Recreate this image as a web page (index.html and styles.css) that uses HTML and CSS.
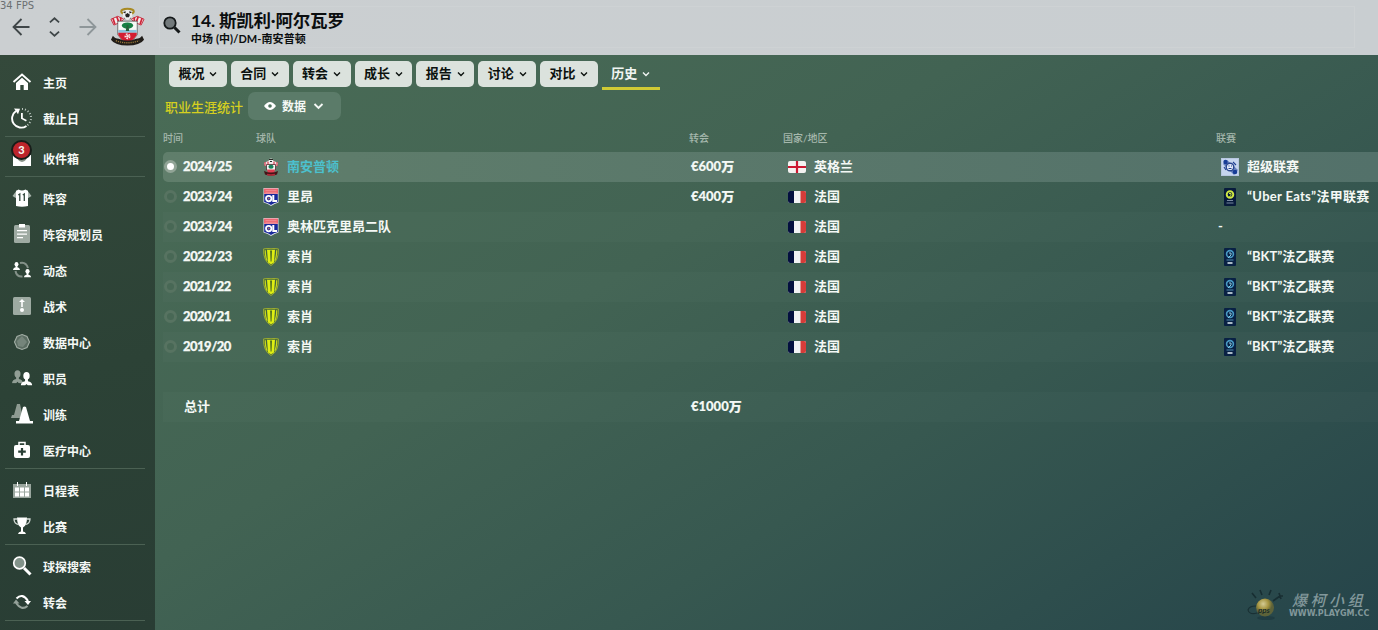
FILE: index.html
```
<!DOCTYPE html>
<html lang="zh-CN">
<head>
<meta charset="utf-8">
<title>斯凯利·阿尔瓦罗</title>
<link rel="stylesheet" href="styles.css">
</head>
<body>
<svg class="defs" aria-hidden="true">
  <symbol id="chev" viewBox="0 0 8 6"><path d="M1 1.500 4 4.500 7 1.500" fill="none" stroke="currentColor" stroke-width="1.400"/></symbol>
  <symbol id="saints" viewBox="0 0 36 40">
    <ellipse cx="18" cy="4" rx="6.500" ry="2.800" fill="none" stroke="#a88a22" stroke-width="2"/>
    <path d="M1 12 8 9l6 3-3 3-7 3zM35 12l-7-3-6 3 3 3 7 3z" fill="#f2eeee" stroke="#c52a3c" stroke-width="1"/>
    <path d="m3 11 2 6M7 9.500l2 5.500M11 10v4M33 11l-2 6M29 9.500 27 15M25 10v4" stroke="#cf2337" stroke-width="1.800"/>
    <circle cx="18" cy="7.500" r="5" fill="#eee"/><path d="m18 5.500 2.500 2-1 2.500h-3l-1-2.500zM13.500 5l2.500-1.500V6zM22.500 5 20 3.500V6zM14.500 10l1.500 2h-1zM21.500 10 20 12h1z" fill="#222"/>
    <path d="M8 14h20v14q-3 6-10 8-7-2-10-8z" fill="#f7f8f6" stroke="#444" stroke-width=".7"/>
    <path d="M8.500 23h19v3h-19z" fill="#8ac3dc"/><path d="M8.500 26h19v2q-3 6-9.500 8-6.500-2-9.500-8z" fill="#d31e32"/>
    <ellipse cx="18" cy="18.500" rx="5.800" ry="3.200" fill="#168044"/><path d="M17.200 18h1.600l1 6h-3.600z" fill="#28613a"/>
    <circle cx="18" cy="29.500" r="2.200" fill="none" stroke="#f8e4e6" stroke-width="1.800" stroke-dasharray="1.600 1"/><circle cx="18" cy="29.500" r="1.200" fill="#f8e4e6"/>
    <path d="M3 29q2 3 6 3 9 4 18 0 4 0 6-3l2 4q-4 6-17 6T1 33z" fill="#211d19"/>
    <path d="M6 34q12 4.500 24 0" fill="none" stroke="#9c7c3c" stroke-width="1.400" stroke-dasharray="1.200 1"/>
  </symbol>
  <symbol id="saints-sm" viewBox="0 0 16 18">
    <path d="M1 5 5 3h6l4 2-1 3H2z" fill="#efdfe1"/><path d="M2 4v4M5 3.500v3M14 4v4M11 3.500v3" stroke="#d84254" stroke-width="1.200"/>
    <circle cx="8" cy="3" r="2.400" fill="#eee"/><path d="M6 1.500h4M7 3.500h2" stroke="#2a2422" stroke-width="1.200"/>
    <path d="M3.500 6.500h9V12L8 16l-4.500-4z" fill="#f4f8f5" stroke="#512b2e" stroke-width=".8"/><ellipse cx="8" cy="8.700" rx="2.600" ry="2" fill="#17805b"/>
    <path d="M4 11.500h8L11 15H5z" fill="#df4052"/><path d="M1 13q7 3 14 0l-1 3.500q-6 2-12 0z" fill="#451417"/><path d="M4 16.500q4 1 8 0" stroke="#b22837" stroke-width="1.500" fill="none"/>
  </symbol>
  <symbol id="ol" viewBox="0 0 15 18">
    <path d="M0 0h15v14.500q-4 1-7.500 3.500Q4.500 15.500 0 14.500z" fill="#e4e5ee"/><path d="M.5.500h14v5.200H.5z" fill="#ed6873"/><path d="M2 2.500h11M2 4.300h11" stroke="#f5959b" stroke-width=".7"/>
    <path d="M.7 6h13.600v8q-4 1-6.800 3Q4.700 15 .7 14z" fill="#17289a"/>
    <circle cx="5.200" cy="10.600" r="2.700" fill="none" stroke="#fff" stroke-width="1.800"/><path d="M9.800 7v6h3.700" fill="none" stroke="#fff" stroke-width="2"/><circle cx="5.200" cy="10.600" r="1" fill="#b76c60"/>
  </symbol>
  <symbol id="sochaux" viewBox="0 0 16 18">
    <path d="M.6.900Q8-.4 15.400.900 16 13 8 17.500 0 13 .6.900z" fill="#42643b" stroke="#a8b72c" stroke-width=".9"/>
    <path d="M4 1.700h8L11 14.500 8 16.300 5 14.500z" fill="#dfee12"/>
    <path d="M2.300 2.200Q2.200 9 4.200 12.800M13.700 2.200q.1 6.800-1.900 10.600" fill="none" stroke="#c8d81c" stroke-width="1.200"/>
    <path d="M7.200 2.500h1.700l-.4 11h-.9z" fill="#3b5d22"/>
  </symbol>
  <symbol id="eng" viewBox="0 0 18 12"><rect width="18" height="12" rx="2" fill="#f3f1f0"/><path d="M9 0v12M0 6h18" stroke="#cc1831" stroke-width="2.200"/></symbol>
  <symbol id="fra" viewBox="0 0 18 12"><rect width="18" height="12" rx="2" fill="#f1f2f4"/><path d="M6 0v12H2q-2 0-2-2V2q0-2 2-2z" fill="#04103f"/><path d="M12.500 0v12H16q2 0 2-2V2q0-2-2-2z" fill="#d63c39"/></symbol>
  <symbol id="pl" viewBox="0 0 18 18"><rect x=".5" y=".5" width="17" height="17" fill="#c6d5ef" stroke="#b8c7e0"/><path d="m2 6 4-4 11 10-4 5z" fill="#6a84c0"/><circle cx="4.500" cy="4" r="2.200" fill="#173c96"/><circle cx="14" cy="14" r="2.300" fill="#173c96"/><circle cx="9" cy="9" r="3.800" fill="#e2eaf8" stroke="#28458f" stroke-width="1.400"/><path d="M7.500 8h1M10 8h1M7.500 10.500h3M3 9l2 3M12 4l3 3" stroke="#1f3f92" stroke-width="1.100"/></symbol>
  <symbol id="l1" viewBox="0 0 12 18"><rect width="12" height="18" rx="1" fill="#081b3c"/><circle cx="6" cy="6.500" r="3.300" fill="none" stroke="#cfe843" stroke-width="1.900"/><path d="M5 5.500h2v2L4 10" stroke="#cfe843" fill="none"/><path d="M3 12.500h6M2.500 15h7" stroke="#7788a0" stroke-width="1"/></symbol>
  <symbol id="l2" viewBox="0 0 12 18"><rect width="12" height="18" rx="1" fill="#092144"/><circle cx="6" cy="6" r="3.400" fill="none" stroke="#4799c4" stroke-width="1.600"/><path d="M5 5h2v2L4 10" stroke="#8bcbe2" fill="none"/><path d="M2.500 12h7" stroke="#518cb0"/><path d="M3.500 15h5" stroke="#d4e2e9" stroke-width="1.600"/></symbol>
  <symbol id="person" viewBox="0 0 12 14"><ellipse cx="6" cy="4" rx="3.300" ry="4"/><path d="M4.500 7h3v2.500q4 .5 4.500 4.500H7.500L6 12.500 4.500 14H0q.5-4 4.500-4.500z"/></symbol>
  <symbol id="bust" viewBox="0 0 8 9"><ellipse cx="4" cy="2.500" rx="2.200" ry="2.500"/><path d="M3 4h2v2q2.500.3 3 3H0q.5-2.700 3-3z"/></symbol>
</svg>

<header class="top">
  <span class="fps">34 FPS</span>
  <div class="nav">
    <svg class="arrow" viewBox="0 0 18 18"><path d="M17.500 9H1.500M9.500 1 1.500 9l8 8" fill="none" stroke="#3f4648" stroke-width="1.800"/></svg>
    <svg class="updown" viewBox="0 0 12 22"><path d="m1 6 5-4.500L11 6M1 16l5 4.500L11 16" fill="none" stroke="#3f4648" stroke-width="1.900"/></svg>
    <svg class="arrow" viewBox="0 0 18 18"><path d="M.5 9h16M8.500 1l8 8-8 8" fill="none" stroke="#8e9699" stroke-width="1.800"/></svg>
  </div>
  <svg class="crest"><use href="#saints"/></svg>
  <div class="titlebar">
    <svg class="find" viewBox="0 0 18 18"><circle cx="7" cy="7" r="5.700" fill="#72797b" stroke="#15191a" stroke-width="1.800"/><path d="m11.500 11.500 5 5" stroke="#15191a" stroke-width="3"/></svg>
    <div class="who"><h1>14. 斯凯利·阿尔瓦罗</h1><p>中场 (中)/DM-南安普顿</p></div>
  </div>
</header>

<div class="body">
<nav class="side">
  <a class="item"><svg viewBox="0 0 22 22"><path d="M2.500 11 11 3.500l8.500 7.500" fill="none" stroke="#fff" stroke-width="1.900"/><path d="m5 12 6-5.200 6 5.200v7h-4.300v-5H9.300v5H5z"/></svg>主页</a>
  <a class="item"><svg viewBox="0 0 22 22"><path d="M5 4A9 9 0 1 0 15.500 19" fill="none" stroke="#fff" stroke-width="1.900"/><path d="M11 2a9 9 0 0 1 5 16.500" fill="none" stroke="#bcc7c0" stroke-width="2" stroke-dasharray="1 2"/><path d="m3 1.500 6 .2-2 5.500zM10 6h1.800v5l4 2-.8 1.400-5-2.600z"/></svg>截止日</a>
  <hr>
  <a class="item mail"><svg viewBox="0 0 22 22"><path d="M2 8h18v11H2z"/><path d="M6 9h10q0 5-5 6-5-1-5-6" fill="#879288"/></svg><b class="badge">3</b>收件箱</a>
  <hr>
  <a class="item"><svg viewBox="0 0 22 22"><path d="M6 3 1.500 9l3.200 2L6 9zM16 3l4.500 6-3.200 2L16 9z" fill="#aab6ae"/><path d="M7.500 2.500q3.500 2 7 0L17 4v15q-6 1.500-12 0V4z"/><path d="m7.300 8 1.500-1v7M11.800 8l1.500-1v7" fill="none" stroke="#33493d" stroke-width="1.300"/></svg>阵容</a>
  <a class="item up"><svg viewBox="0 0 22 22"><rect x="3" y="3" width="16" height="18" rx="1.500" fill="#9eaaa2"/><path d="M8 2h6v3.500H8zM6 8h10v1.200H6zm0 3.500h10v1.200H6zM6 15h6v1.200H6z"/></svg>阵容规划员</a>
  <a class="item"><svg viewBox="0 0 22 22"><path d="M9 4q6-1.500 8 5M4.500 12q1 6 7 5.500" fill="none" stroke="#849189" stroke-width="2"/><use href="#bust" x="1.500" y="3" width="8" height="8"/><use href="#bust" x="12.500" y="10" width="8" height="8.500"/></svg>动态</a>
  <a class="item"><svg viewBox="0 0 22 22"><rect x="2" y="2" width="18" height="18" rx="1.500" fill="#9eaaa2"/><circle cx="11" cy="15" r="2"/><path d="M10.200 12V7H8l3-3 3 3h-2.200v5z"/></svg>战术</a>
  <a class="item"><svg viewBox="0 0 22 22"><path d="m11 3.500 5 2 2.500 5.500-2.500 5.500-5 2-5-2L3.500 11 6 5.500z" fill="#5b6d62" stroke="#a2aea5" stroke-width="1.100"/><path d="m6 10 5-5 5 6-4 5-5-1z" fill="#75857b"/></svg>数据中心</a>
  <a class="item"><svg viewBox="0 0 22 22"><g fill="#919e95"><use href="#person" x="1" y="3" width="11" height="13.500"/></g><use href="#person" x="9.500" y="5" width="12" height="13.500"/></svg>职员</a>
  <a class="item"><svg viewBox="0 0 22 22"><path d="M6 1h3l3 14H0l1-3h2z" fill="#8e9b92"/><path d="M12 4q1.500-1 3 0l4 14h3.500v2.500H5V18h3z"/></svg>训练</a>
  <a class="item"><svg viewBox="0 0 22 22"><rect x="3" y="6" width="16" height="13" rx="2"/><path d="M8 6V3.500h6V6" fill="none" stroke="#fff" stroke-width="1.500"/><path d="M11 9v7.500M7.200 12.700h7.600" stroke="#293f35" stroke-width="2.200"/></svg>医疗中心</a>
  <hr>
  <a class="item"><svg viewBox="0 0 22 22"><path d="M2 5h18v14H2z" fill="#9aa69e"/><path d="M4 8.500h4v4H4zm5 0h4v4H9zm5 0h4v4h-4zM4 13.500h4v4H4zm5 0h4v4H9zm5 0h4v4h-4zM6 3h1v4H6zm9 0h1v4h-1z"/></svg>日程表</a>
  <a class="item"><svg viewBox="0 0 22 22"><path d="M6 2.500h10q0 8-4 10v4q2.500 0 3 2.500H7q.5-2.500 3-2.500v-4q-4-2-4-10z"/><path d="M6 4H3q0 5 5 5.500M16 4h3q0 5-5 5.500" fill="none" stroke="#d6ddd8" stroke-width="1.300"/></svg>比赛</a>
  <hr>
  <a class="item"><svg viewBox="0 0 22 22"><circle cx="8.500" cy="8" r="5.800" fill="#82938a" stroke="#fff" stroke-width="1.700"/><path d="m13 13 6.500 6.500" stroke="#fff" stroke-width="3"/></svg>球探搜索</a>
  <a class="item"><svg viewBox="0 0 22 22"><path d="M5.500 7.500q6-6 11.500 2.500" fill="none" stroke="#fff" stroke-width="2.100"/><path d="M13.500 10H20l-3 4z"/><path d="M16.500 15q-6 5-11.500-3" fill="none" stroke="#95a29a" stroke-width="2.100"/><path d="M2 12.500h6.500L5 8.500z" fill="#95a29a"/></svg>转会</a>
  <hr>
</nav>

<main class="main">
  <div class="tabs">
    <a class="tab">概况<svg><use href="#chev"/></svg></a><a class="tab">合同<svg><use href="#chev"/></svg></a><a class="tab">转会<svg><use href="#chev"/></svg></a><a class="tab">成长<svg><use href="#chev"/></svg></a><a class="tab">报告<svg><use href="#chev"/></svg></a><a class="tab">讨论<svg><use href="#chev"/></svg></a><a class="tab">对比<svg><use href="#chev"/></svg></a><a class="tab on">历史<svg><use href="#chev"/></svg></a>
  </div>
  <div class="sub">
    <h2>职业生涯统计</h2>
    <a class="view"><svg class="eye" viewBox="0 0 12 8"><path d="M0 4q6-8 12 0-6 8-12 0z" fill="#fff"/><circle cx="6" cy="4" r="1.800" fill="#4f715e"/></svg>数据<svg class="vchev"><use href="#chev"/></svg></a>
  </div>
  <div class="table">
    <div class="row head"><span>时间</span><span>球队</span><span>转会</span><span>国家/地区</span><span>联赛</span></div>
    <div class="row sel"><span class="date"><i></i>2024/25</span><span class="club"><svg><use href="#saints-sm"/></svg><em>南安普顿</em></span><span class="fee">€600万</span><span class="nat"><svg><use href="#eng"/></svg>英格兰</span><span class="lg"><svg><use href="#pl"/></svg>超级联赛</span></div>
    <div class="row"><span class="date"><i></i>2023/24</span><span class="club"><svg><use href="#ol"/></svg>里昂</span><span class="fee">€400万</span><span class="nat"><svg><use href="#fra"/></svg>法国</span><span class="lg uber"><svg><use href="#l1"/></svg>“Uber Eats”法甲联赛</span></div>
    <div class="row alt"><span class="date"><i></i>2023/24</span><span class="club"><svg><use href="#ol"/></svg>奥林匹克里昂二队</span><span></span><span class="nat"><svg><use href="#fra"/></svg>法国</span><span class="none">-</span></div>
    <div class="row"><span class="date"><i></i>2022/23</span><span class="club"><svg><use href="#sochaux"/></svg>索肖</span><span></span><span class="nat"><svg><use href="#fra"/></svg>法国</span><span class="lg"><svg><use href="#l2"/></svg>“BKT”法乙联赛</span></div>
    <div class="row alt"><span class="date narrow"><i></i>2021/22</span><span class="club"><svg><use href="#sochaux"/></svg>索肖</span><span></span><span class="nat"><svg><use href="#fra"/></svg>法国</span><span class="lg"><svg><use href="#l2"/></svg>“BKT”法乙联赛</span></div>
    <div class="row"><span class="date narrow"><i></i>2020/21</span><span class="club"><svg><use href="#sochaux"/></svg>索肖</span><span></span><span class="nat"><svg><use href="#fra"/></svg>法国</span><span class="lg"><svg><use href="#l2"/></svg>“BKT”法乙联赛</span></div>
    <div class="row alt"><span class="date narrow"><i></i>2019/20</span><span class="club"><svg><use href="#sochaux"/></svg>索肖</span><span></span><span class="nat"><svg><use href="#fra"/></svg>法国</span><span class="lg"><svg><use href="#l2"/></svg>“BKT”法乙联赛</span></div>
    <div class="row alt total"><span class="sum">总计</span><span></span><span class="fee">€1000万</span></div>
  </div>
  <div class="mark">
    <svg viewBox="0 0 38 36"><defs><radialGradient id="ball" cx=".4" cy=".3"><stop offset="0" stop-color="#d4cb94"/><stop offset=".6" stop-color="#a59440"/><stop offset="1" stop-color="#5d6239"/></radialGradient></defs><ellipse cx="19" cy="31" rx="9" ry="2" fill="#203c42"/><circle cx="18" cy="20.500" r="9" fill="url(#ball)"/><path d="M9 11 5 6M15 8l-2-5M22 8l2-5M26 14l7-5m-1-3 2 6m-2-3h4" stroke="#182e32" stroke-width="1.600" fill="none"/><path d="M9 19q-7 0-8 4 1 5 9 3" fill="none" stroke="#1a3034" stroke-width="1.200"/><text x="11" y="26" class="ballText">pps</text></svg>
    <div class="words"><strong>爆柯小组</strong><small>WWW.PLAYGM.CC</small></div>
  </div>
</main>
</div>
</body>
</html>
```
FILE: styles.css
```
* { box-sizing: border-box; }
body {
  margin: 0; width: 1378px; height: 630px; overflow: hidden;
  display: flex; flex-direction: column;
  font-family: Lato, "Noto Sans CJK SC", sans-serif;
  font-weight: 700; color: #f4f8f5;
}
.defs { position: absolute; width: 0; height: 0; }
h1, h2, p { margin: 0; }

.top {
  position: relative; height: 55px; flex: none; display: flex; align-items: center; padding-bottom: 2px;
  background: linear-gradient(90deg, #cbcfd1, #c9ced1); color: #0b0e0f;
}
.fps { position: absolute; left: 0; top: 0; font: 10px/12px "DejaVu Sans", sans-serif; color: #6b7072; }
.nav { display: flex; align-items: center; gap: 19px; padding-left: 12px; width: 110px; }
.arrow { width: 18px; height: 18px; flex: none; }
.updown { width: 11px; height: 22px; flex: none; }
.crest { width: 35px; height: 40px; flex: none; }
.titlebar { display: flex; align-items: center; gap: 10px; margin-left: 14px; padding-left: 3px; width: 1196px; height: 42px; border: 1px solid #ced2d4; }
.find { width: 18px; height: 18px; margin-bottom: 3px; }
.who { padding-top: 2px; }
.who h1 { font-size: 17.500px; line-height: 22px; letter-spacing: -.2px; white-space: nowrap; }
.who p { font-size: 11px; line-height: 14px; white-space: nowrap; letter-spacing: .08px; }

.body { flex: 1; display: flex; min-height: 0; }
.side { width: 155px; flex: none; padding: 9px 10px 0 5px; background: linear-gradient(165deg, #34493b, #2c4236 55%, #293d34); }
.side hr { height: 1px; margin: 0 0 3px; border: 0; background: #4b6153; }
.item { position: relative; height: 36px; padding-left: 6px; display: flex; align-items: center; gap: 10px; font-size: 12px; white-space: nowrap; }
.item svg { width: 22px; height: 22px; fill: #fff; flex: none; }
.item.up svg { margin-bottom: 2px; }
.badge {
  position: absolute; left: 6px; top: 0; width: 21px; height: 20px; border-radius: 50%;
  border: 2px solid #181d19; background: #bd242b; font-size: 11px; line-height: 16px; text-align: center;
}

.main { flex: 1; min-width: 0; position: relative; background: linear-gradient(148deg, #4a6c56 0%, #426353 38%, #375850 64%, #25444a 100%); }
.tabs { display: flex; gap: 4px; padding: 6px 0 0 14px; }
.tab { width: 57.850px; height: 26px; padding-bottom: 2px; border-radius: 5px; background: #dbe2dd; color: #0c120f; display: flex; align-items: center; justify-content: center; gap: 5px; font-size: 13px; line-height: 24px; }
.tab svg { width: 8px; height: 6px; margin: 2px 0 0; }
.tab.on { height: 29px; border-radius: 0; background: none; color: #f0f5f2; border-bottom: 3px solid #d0ca35; }
.sub { display: flex; align-items: center; height: 28px; margin-top: 2px; padding-left: 10px; gap: 5px; }
.sub h2 { width: 78px; font-size: 13px; font-weight: 500; line-height: 20px; color: #d6cf20; white-space: nowrap; padding-top: 1px; }
.view { width: 93px; height: 28px; padding-bottom: 1px; border-radius: 7px; background: #5b7b69; display: flex; align-items: center; padding-left: 16px; font-size: 12px; }
.eye { width: 12px; height: 8px; margin-right: 6px; }
.vchev { width: 11px; height: 8px; margin-left: 7px; }

.table { padding-left: 8px; }
.row { height: 30px; padding-bottom: 3px; display: grid; grid-template-columns: 93px 433px 94px 433px 1fr; align-items: center; font-size: 13px; white-space: nowrap; }
.row > span { display: flex; align-items: center; }
.head { height: 32px; padding: 2px 0 0; font-size: 10px; font-weight: 500; color: #a6b8ad; }
.sel { background: linear-gradient(90deg, #607e6b, #53716a); border-radius: 5px 0 0 5px; }
.alt { background: rgba(255, 255, 255, .018); }
.date { gap: 6px; padding-left: 1px; font-weight: 900; letter-spacing: -.36px; -webkit-text-stroke: .25px; }
.date.narrow { letter-spacing: -.5px; }
.date i { width: 13px; height: 13px; margin: 2px 0 0; border-radius: 50%; border: 3.500px solid #577361; background: #486855; }
.sel .date i { border-color: #91a496; background: #fff; }
.club svg { width: 16px; height: 18px; margin: 3px 8px 0 7px; }
.club { padding-left: 0; }
.club em { font-style: normal; color: #4cc0cd; }
.fee { padding-left: 2px; font-weight: 900; -webkit-text-stroke: .15px; }
.nat svg { width: 18px; height: 12px; margin: 3px 8px 0 5px; }
.lg svg { width: 18px; height: 18px; margin: 2px 8px 0 5px; }
.uber { letter-spacing: .3px; }
.none { padding-left: 2px; }
.total { margin-top: 30px; }
.sum { padding-left: 21px; }

.mark { position: absolute; right: 9px; bottom: 7px; display: flex; align-items: center; gap: 4px; color: #82989b; }
.mark svg { width: 38px; height: 36px; }
.ballText { font: italic 700 8px Lato, sans-serif; fill: #182b28; }
.words { display: flex; flex-direction: column; width: 80px; gap: 1px; }
.words strong { font: italic 500 15px/16px "Noto Sans CJK SC", sans-serif; letter-spacing: 3.500px; padding-left: 3px; white-space: nowrap; }
.words small { font: 700 8px/10px "DejaVu Sans", sans-serif; white-space: nowrap; }
```
